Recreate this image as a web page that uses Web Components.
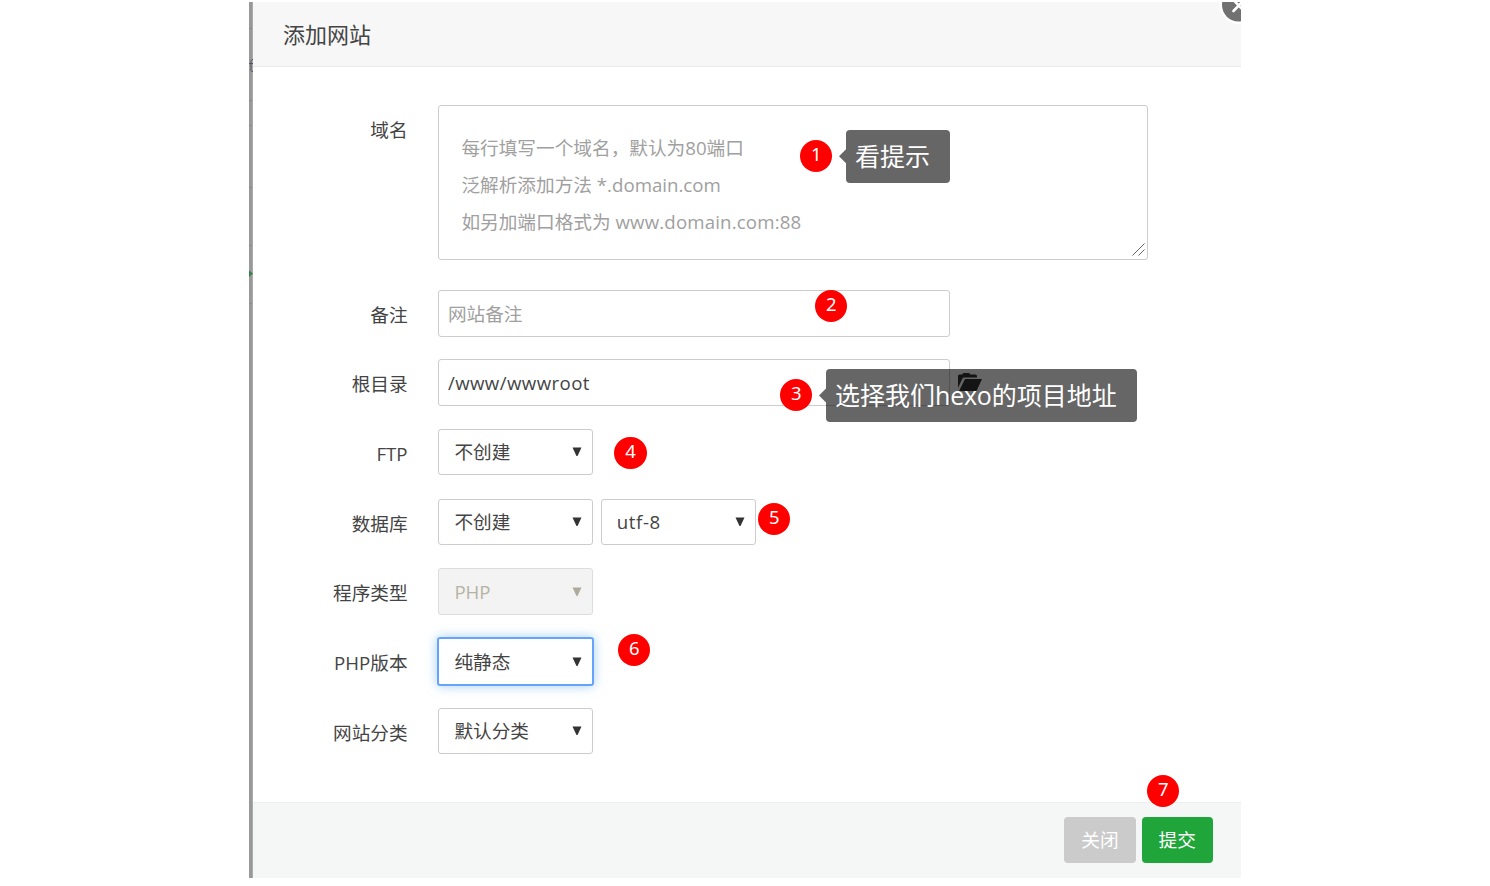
<!DOCTYPE html>
<html lang="zh-CN">
<head>
<meta charset="utf-8">
<title>添加网站</title>
<style>
    body {
        margin: 0;
        background: #fff;
        color: #444;
        font: 18.67px/25px "Open Sans", "Noto Sans CJK SC", sans-serif;
    }
</style>
</head>
<body>
<site-dialog heading="添加网站">
    <form-row label="域名" style="--h: 155px; --label-h: 49px">
        <domain-area>
            <div>每行填写一个域名，默认为<span>80</span>端口</div>
            <div>泛解析添加方法 <span>*.domain.com</span></div>
            <div>如另加端口格式为 <span style="letter-spacing: 0.15px">www.domain.com:88</span></div>
        </domain-area>
    </form-row>
    <form-row label="备注" style="--top: 30px; --h: 47px; --label-h: 49px">
        <text-field placeholder>网站备注</text-field>
    </form-row>
    <form-row label="根目录" style="--top: 22px; --h: 47px; --label-h: 49px">
        <text-field style="letter-spacing: 0.4px">/www/wwwroot</text-field>
        <folder-icon></folder-icon>
    </form-row>
    <form-row label="FTP" style="--top: 23px; --h: 47px; --label-h: 50px">
        <select-box>不创建</select-box>
    </form-row>
    <form-row label="数据库" style="--top: 23px; --h: 46px; --label-h: 49px">
        <select-box>不创建</select-box>
        <select-box style="letter-spacing: 0.6px">utf-8</select-box>
    </form-row>
    <form-row label="程序类型" style="--top: 23px; --h: 47px; --label-h: 49px">
        <select-box disabled>PHP</select-box>
    </form-row>
    <form-row label="PHP版本" style="--top: 22px; --h: 48px; --label-h: 51px">
        <select-box focused>纯静态</select-box>
    </form-row>
    <form-row label="网站分类" style="--top: 23px; --h: 46px; --label-h: 50px">
        <select-box>默认分类</select-box>
    </form-row>
    <dialog-button slot="footer">关闭</dialog-button>
    <dialog-button slot="footer" primary>提交</dialog-button>

    <step-mark slot="marks" x="816" y="155.5">1</step-mark>
    <step-mark slot="marks" x="831" y="305.5">2</step-mark>
    <step-mark slot="marks" x="796" y="394.5">3</step-mark>
    <step-mark slot="marks" x="630.3" y="453">4</step-mark>
    <step-mark slot="marks" x="774" y="518.5">5</step-mark>
    <step-mark slot="marks" x="634" y="650">6</step-mark>
    <step-mark slot="marks" x="1163" y="791">7</step-mark>
    <step-tip slot="marks" x="846" y="129.5" width="104">看提示</step-tip>
    <step-tip slot="marks" x="826" y="368.7" width="311">选择我们<span style="font-weight: 500; letter-spacing: -0.2px">hexo</span>的项目地址</step-tip>
</site-dialog>

<script>
class SiteDialog extends HTMLElement {
    constructor() {
        super();
        this.shadowDOM = this.attachShadow({mode: 'open'});
    }

    connectedCallback() {
        this.render()
    }

    render() {
        this.shadowDOM.innerHTML = `
        <style>
            :host {
                display: block;
                height: 876px;
                width: 992px;
                margin: 2px 0 0 249px;
            }

            .frame {
                display: flex;
                height: 100%;
                overflow: hidden;
            }

            .page-edge {
                flex: none;
                width: 4px;
                background: linear-gradient(90deg, #999 75%, #aaa 75%);
            }

            .page-edge svg {
                display: block;
            }

            .panel {
                flex: 1;
                display: flex;
                flex-direction: column;
                background: #fff;
                border-top-left-radius: 2px;
            }

            header {
                display: flex;
                justify-content: space-between;
                box-sizing: border-box;
                height: 65px;
                padding-left: 30px;
                background: #f7f7f7;
                border-bottom: 1px solid #eaeaea;
                font-size: 22px;
                line-height: 64px;
                color: #444;
            }

            header svg {
                display: block;
            }

            main {
                flex: 1;
                padding-top: 38px;
            }

            footer {
                display: flex;
                justify-content: flex-end;
                gap: 6px;
                box-sizing: border-box;
                height: 76px;
                padding: 14px 28.500px 0 0;
                background: #f5f7f7;
                border-top: 1px solid #edeeee;
            }
        </style>

        <div class="frame">
            <div class="page-edge">
                <svg width="4" height="876" viewBox="0 0 4 876">
                    <path d="M0 26.500h3M0 98.500h3M0 123.500h3M0 185.500h3M0 243.500h3M0 301.500h3" stroke="#8b8b8b"/>
                    <path d="M4 57.500C2 57.500 2 59 2 61V68.500Q2 69.500 4 69.500M0 61.500H4" fill="none" stroke="#555064"/>
                    <path d="M0 268.500L4 271.500L0 275Z" fill="#33834b"/>
                </svg>
            </div>
            <div class="panel">
                <header>
                    <span>${this.getAttribute('heading')}</span>
                    <svg width="22" height="24" viewBox="0 0 22 24">
                        <circle cx="19.500" cy="3" r="19" fill="#fff"/>
                        <circle cx="19.500" cy="3" r="16.500" fill="#717171"/>
                        <path d="M14.500 9L25 -2M14.500 -2L25 9" stroke="#fff" stroke-width="2.600" stroke-linecap="round"/>
                    </svg>
                </header>
                <main><slot></slot></main>
                <footer><slot name="footer"></slot></footer>
            </div>
        </div>
        <slot name="marks"></slot>
        `
    }
}

class FormRow extends HTMLElement {
    constructor() {
        super();
        this.shadowDOM = this.attachShadow({mode: 'open'});
    }

    connectedCallback() {
        this.render()
    }

    render() {
        this.shadowDOM.innerHTML = `
        <style>
            :host {
                display: flex;
                height: var(--h);
                margin-top: var(--top, 0);
            }

            .label {
                flex: none;
                width: 154.600px;
                margin-right: 30.800px;
                text-align: right;
                line-height: var(--label-h);
            }

            .control {
                display: flex;
                align-items: flex-start;
                gap: 7.400px;
            }
        </style>

        <div class="label">${this.getAttribute('label')}</div>
        <div class="control"><slot></slot></div>
        `
    }
}

class DomainArea extends HTMLElement {
    constructor() {
        super();
        this.shadowDOM = this.attachShadow({mode: 'open'});
    }

    connectedCallback() {
        this.render()
    }

    render() {
        this.shadowDOM.innerHTML = `
        <style>
            :host {
                display: flex;
                justify-content: space-between;
                align-items: flex-end;
                box-sizing: border-box;
                width: 710px;
                height: 155px;
                padding: 0 1px 3px 22px;
                border: 1px solid #ccc;
                border-radius: 3px;
                color: #a0a0a0;
                line-height: 37.200px;
            }

            .hints {
                align-self: flex-start;
                padding-top: 23px;
                white-space: nowrap;
            }
        </style>

        <div class="hints"><slot></slot></div>
        <svg width="14" height="14" viewBox="0 0 14 14">
            <path d="M0.500 13.500L12.500 1.500M6.500 13.500L12.500 7.500" stroke="#666"/>
        </svg>
        `
    }
}

class TextField extends HTMLElement {
    constructor() {
        super();
        this.shadowDOM = this.attachShadow({mode: 'open'});
    }

    connectedCallback() {
        this.render()
    }

    render() {
        this.shadowDOM.innerHTML = `
        <style>
            :host {
                display: block;
                box-sizing: border-box;
                width: 512px;
                height: 47px;
                padding-left: 8.500px;
                border: 1px solid #ccc;
                border-radius: 3px;
                line-height: 46px;
            }

            :host([placeholder]) {
                color: #a0a0a0;
                line-height: 45px;
            }
        </style>

        <slot></slot>
        `
    }
}

class SelectBox extends HTMLElement {
    constructor() {
        super();
        this.shadowDOM = this.attachShadow({mode: 'open'});
    }

    connectedCallback() {
        this.render()
    }

    render() {
        this.shadowDOM.innerHTML = `
        <style>
            :host {
                display: flex;
                justify-content: space-between;
                align-items: center;
                box-sizing: border-box;
                width: 155px;
                height: 46px;
                padding: 0 10px 0 15px;
                border: 1px solid #ccc;
                border-radius: 3px;
                --arrow: #333;
            }

            span {
                padding-bottom: 1px;
            }

            :host([disabled]) {
                height: 47px;
                background: #f3f3f3;
                border-color: #ddd;
                color: #b5b3a4;
                --arrow: #aeab9b;
            }

            :host([focused]) {
                width: 157px;
                height: 49px;
                margin-left: -1px;
                border: 2px solid #66a3fb;
                border-radius: 3px;
                box-shadow: 0 0 11px rgba(102, 175, 233, .6);
            }
        </style>

        <span><slot></slot></span>
        <svg width="10" height="10" viewBox="0 0 10 10">
            <path d="M0.500 0.500H9.500L5.500 9H4.500Z" fill="var(--arrow)"/>
        </svg>
        `
    }
}

class FolderIcon extends HTMLElement {
    constructor() {
        super();
        this.shadowDOM = this.attachShadow({mode: 'open'});
    }

    connectedCallback() {
        this.render()
    }

    render() {
        this.shadowDOM.innerHTML = `
        <style>
            :host {
                display: block;
                padding-top: 14px;
            }

            svg {
                display: block;
            }
        </style>

        <svg width="24" height="19" viewBox="0 0 24 19" fill="#333">
            <path d="M0 15V3Q0 1.500 1.500 1.500H4L5.500 0H11L12.500 1.500H17.500Q19 1.500 19 3V4.500H6Q5 4.500 4.500 5.500Z"/>
            <path d="M7 6H24L18.500 18H1Z"/>
        </svg>
        `
    }
}

class DialogButton extends HTMLElement {
    constructor() {
        super();
        this.shadowDOM = this.attachShadow({mode: 'open'});
    }

    connectedCallback() {
        this.render()
    }

    render() {
        this.shadowDOM.innerHTML = `
        <style>
            :host {
                display: block;
                width: 72px;
                height: 46px;
                border-radius: 4px;
                background: #cbcbcb;
                color: #fff;
                text-align: center;
                line-height: 46px;
            }

            :host([primary]) {
                width: 70.500px;
                background: #20a53a;
            }
        </style>

        <slot></slot>
        `
    }
}

// numbered circle, x and y are its centre
class StepMark extends HTMLElement {
    constructor() {
        super();
        this.shadowDOM = this.attachShadow({mode: 'open'});
    }

    connectedCallback() {
        this.render()
    }

    render() {
        this.shadowDOM.innerHTML = `
        <style>
            :host {
                position: absolute;
                left: ${this.getAttribute('x') - 16}px;
                top: ${this.getAttribute('y') - 16}px;
                width: 32.400px;
                height: 32.400px;
                border-radius: 50%;
                background: #f00;
                color: #fff;
                font-family: "Noto Sans", sans-serif;
                font-size: 18.500px;
                line-height: 27px;
                text-align: center;
            }
        </style>

        <slot></slot>
        `
    }
}

class StepTip extends HTMLElement {
    constructor() {
        super();
        this.shadowDOM = this.attachShadow({mode: 'open'});
    }

    connectedCallback() {
        this.render()
    }

    render() {
        this.shadowDOM.innerHTML = `
        <style>
            :host {
                position: absolute;
                left: ${this.getAttribute('x') - 7}px;
                top: ${this.getAttribute('y')}px;
                display: flex;
                align-items: center;
                color: #fff;
                font-size: 25px;
            }

            .arrow {
                width: 7px;
                height: 14px;
                background: rgba(0, 0, 0, .6);
                clip-path: polygon(0 50%, 100% 0, 100% 100%);
            }

            .box {
                box-sizing: border-box;
                width: ${this.getAttribute('width')}px;
                height: 53.500px;
                padding-left: 9px;
                border-radius: 4px;
                background: rgba(0, 0, 0, .6);
                line-height: 53px;
                white-space: nowrap;
            }
        </style>

        <div class="arrow"></div>
        <div class="box"><slot></slot></div>
        `
    }
}

customElements.define('site-dialog', SiteDialog)
customElements.define('form-row', FormRow)
customElements.define('domain-area', DomainArea)
customElements.define('text-field', TextField)
customElements.define('select-box', SelectBox)
customElements.define('folder-icon', FolderIcon)
customElements.define('dialog-button', DialogButton)
customElements.define('step-mark', StepMark)
customElements.define('step-tip', StepTip)
</script>
</body>
</html>
